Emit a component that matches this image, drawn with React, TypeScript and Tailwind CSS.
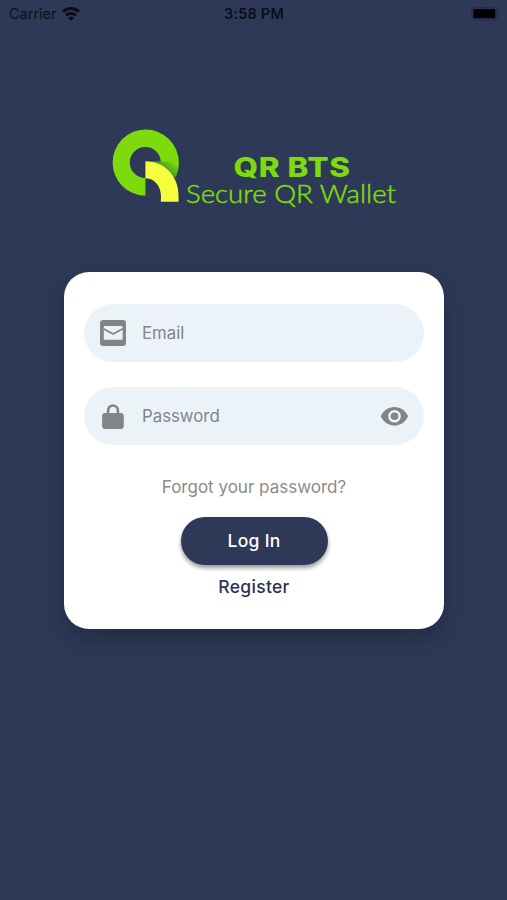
import React from "react";

const fields = [
  {
    name: "email",
    label: "Email",
    // Envelope inside a rounded square
    icon: (
      <svg width="26" height="26" viewBox="0 0 26 26">
        <rect width="26" height="26" rx="3.2" fill="#808588" />
        <rect x="3.8" y="6" width="18.8" height="13.8" rx="0.8" fill="#ebf3f9" />
        <path d="M3.4 8.7 13 14l9.8-5.3" fill="none" stroke="#808588" strokeWidth="1.6" />
      </svg>
    ),
    trailing: null,
  },
  {
    name: "password",
    label: "Password",
    icon: (
      <svg width="26" height="26" viewBox="0 0 26 26">
        <path d="M8.1 11V7.4a4.9 4.9 0 0 1 9.8 0V11" fill="none" stroke="#808588" strokeWidth="2.6" />
        <rect x="2.1" y="10" width="21.7" height="15.9" rx="2.8" fill="#808588" />
      </svg>
    ),
    trailing: (
      <svg width="28" height="20" viewBox="0 0 28 20">
        <path
          fillRule="evenodd"
          fill="#808588"
          d="M14.5 .9C8.3 .9 3.1 4.7 .8 10.2c2.3 5.5 7.5 9.3 13.7 9.3s11.4-3.8 13.5-9.3C25.9 4.700 20.7 .9 14.5 .9Zm0 15.6a6.3 6.3 0 1 1 0-12.6 6.3 6.3 0 0 1 0 12.6Z"
        />
        <circle cx="14.5" cy="10.2" r="3.8" fill="#808588" />
      </svg>
    ),
  },
];

function StatusBar() {
  return (
    <header className="grid h-7 grid-cols-3 items-center pl-[9px] pr-[7px] text-[#0b0e18]">
      <div className="flex items-center gap-[6px]">
        <span className="text-[14.5px] leading-none">Carrier</span>
        <svg className="-ml-px -mt-px" width="18" height="14" viewBox="0 0 18 14">
          <g fill="none" stroke="#0b0e18" strokeWidth="2.9">
            <path d="M1 4.8a11.5 11.5 0 0 1 16 0" />
            <path d="M4 8.4a7.3 7.3 0 0 1 10 0" />
          </g>
          <path d="M9 13.7 6.1 10.9a4.1 4.1 0 0 1 5.8 0Z" fill="#0b0e18" />
        </svg>
      </div>
      <span className="-ml-px text-center text-[14.5px] font-semibold leading-none tracking-[0.2px]">3:58 PM</span>
      <div className="flex justify-end">
        <svg width="30" height="14" viewBox="0 0 30 14">
          <rect x="1.7" y="0.7" width="25" height="12.2" rx="3.5" fill="none" stroke="#262d4b" strokeWidth="1.2" />
          <rect x="3.3" y="2" width="22" height="9.3" rx="1.5" fill="#000" />
          <path d="M28.1 4.8v4.4c1.8-.8 1.8-3.6 0-4.4Z" fill="#262d4b" />
        </svg>
      </div>
    </header>
  );
}

function Logo() {
  return (
    <svg className="mx-auto mt-[97px] block" width="291" height="84" viewBox="108 125 291 84">
      <defs>
        <linearGradient id="fold" gradientUnits="userSpaceOnUse" x1="168" y1="170" x2="174" y2="162">
          <stop offset="0" stopColor="#4aa51f" />
          <stop offset="1" stopColor="#7ddb0c" />
        </linearGradient>
      </defs>
      {/* Green ring, open at the lower right */}
      <path
        fill="#7ddb0c"
        d="M145.4 195.7A33.1 33.1 0 1 1 178.8 162L160.8 162A15.5 15.5 0 1 0 145.4 178Z"
      />
      <path fill="url(#fold)" d="M150 161.5H178.8A33 33 0 0 1 175.4 177.5L160 168Z" />
      {/* Yellow tail */}
      <path
        fill="#f5ff3d"
        d="M145.4 161.3C165 161.3 178.5 176.5 178.5 195V201.700H160.8C162.5 188 156 178.5 145.4 178.2Z"
      />
      <g fill="#7ddb0c">
        <text
          x="233.5"
          y="177.3"
          textLength="117"
          lengthAdjust="spacingAndGlyphs"
          className="font-['Inter'] text-[27px] font-extrabold tracking-[0.5px]"
        >
          QR BTS
        </text>
        <text
          x="186"
          y="202.5"
          textLength="210"
          lengthAdjust="spacingAndGlyphs"
          className="font-['Lato'] text-[25.5px] font-light"
          stroke="#7ddb0c"
          strokeWidth="0.5"
        >
          Secure QR Wallet
        </text>
      </g>
    </svg>
  );
}

export default function App() {
  return (
    <div className="min-h-[900px] w-full overflow-hidden bg-[#2e3957] font-['Inter',sans-serif]">
      <StatusBar />
      <Logo />

      {/* Login card */}
      <main className="ml-16 mt-[63px] flex h-[357px] w-[380px] flex-col items-center rounded-[25px] bg-white px-5 pt-8 shadow-[0_10px_20px_rgba(20,35,50,0.5)]">
        <div className="flex w-full flex-col gap-[25px]">
          {fields.map((field) => (
            <div key={field.name} className="flex h-[58px] items-center rounded-full bg-[#ebf3f9] px-4">
              {field.icon}
              <span className="ml-4 flex-1 text-[16.8px] leading-none text-[#80868b]">{field.label}</span>
              {field.trailing}
            </div>
          ))}
        </div>
        <a className="mt-[33px] text-[17px] leading-[18px] text-[#8b8b8b]">Forgot your password?</a>
        <button className="mt-[21px] h-[48px] w-[147px] rounded-full bg-[#2e3957] text-[17.5px] font-medium tracking-[0.3px] text-white shadow-[0_3px_4px_rgba(0,0,0,0.4)]">
          Log In
        </button>
        <a className="mt-[13px] text-[17.5px] font-medium leading-[18px] tracking-[0.3px] text-[#2e3358]">Register</a>
      </main>
    </div>
  );
}
